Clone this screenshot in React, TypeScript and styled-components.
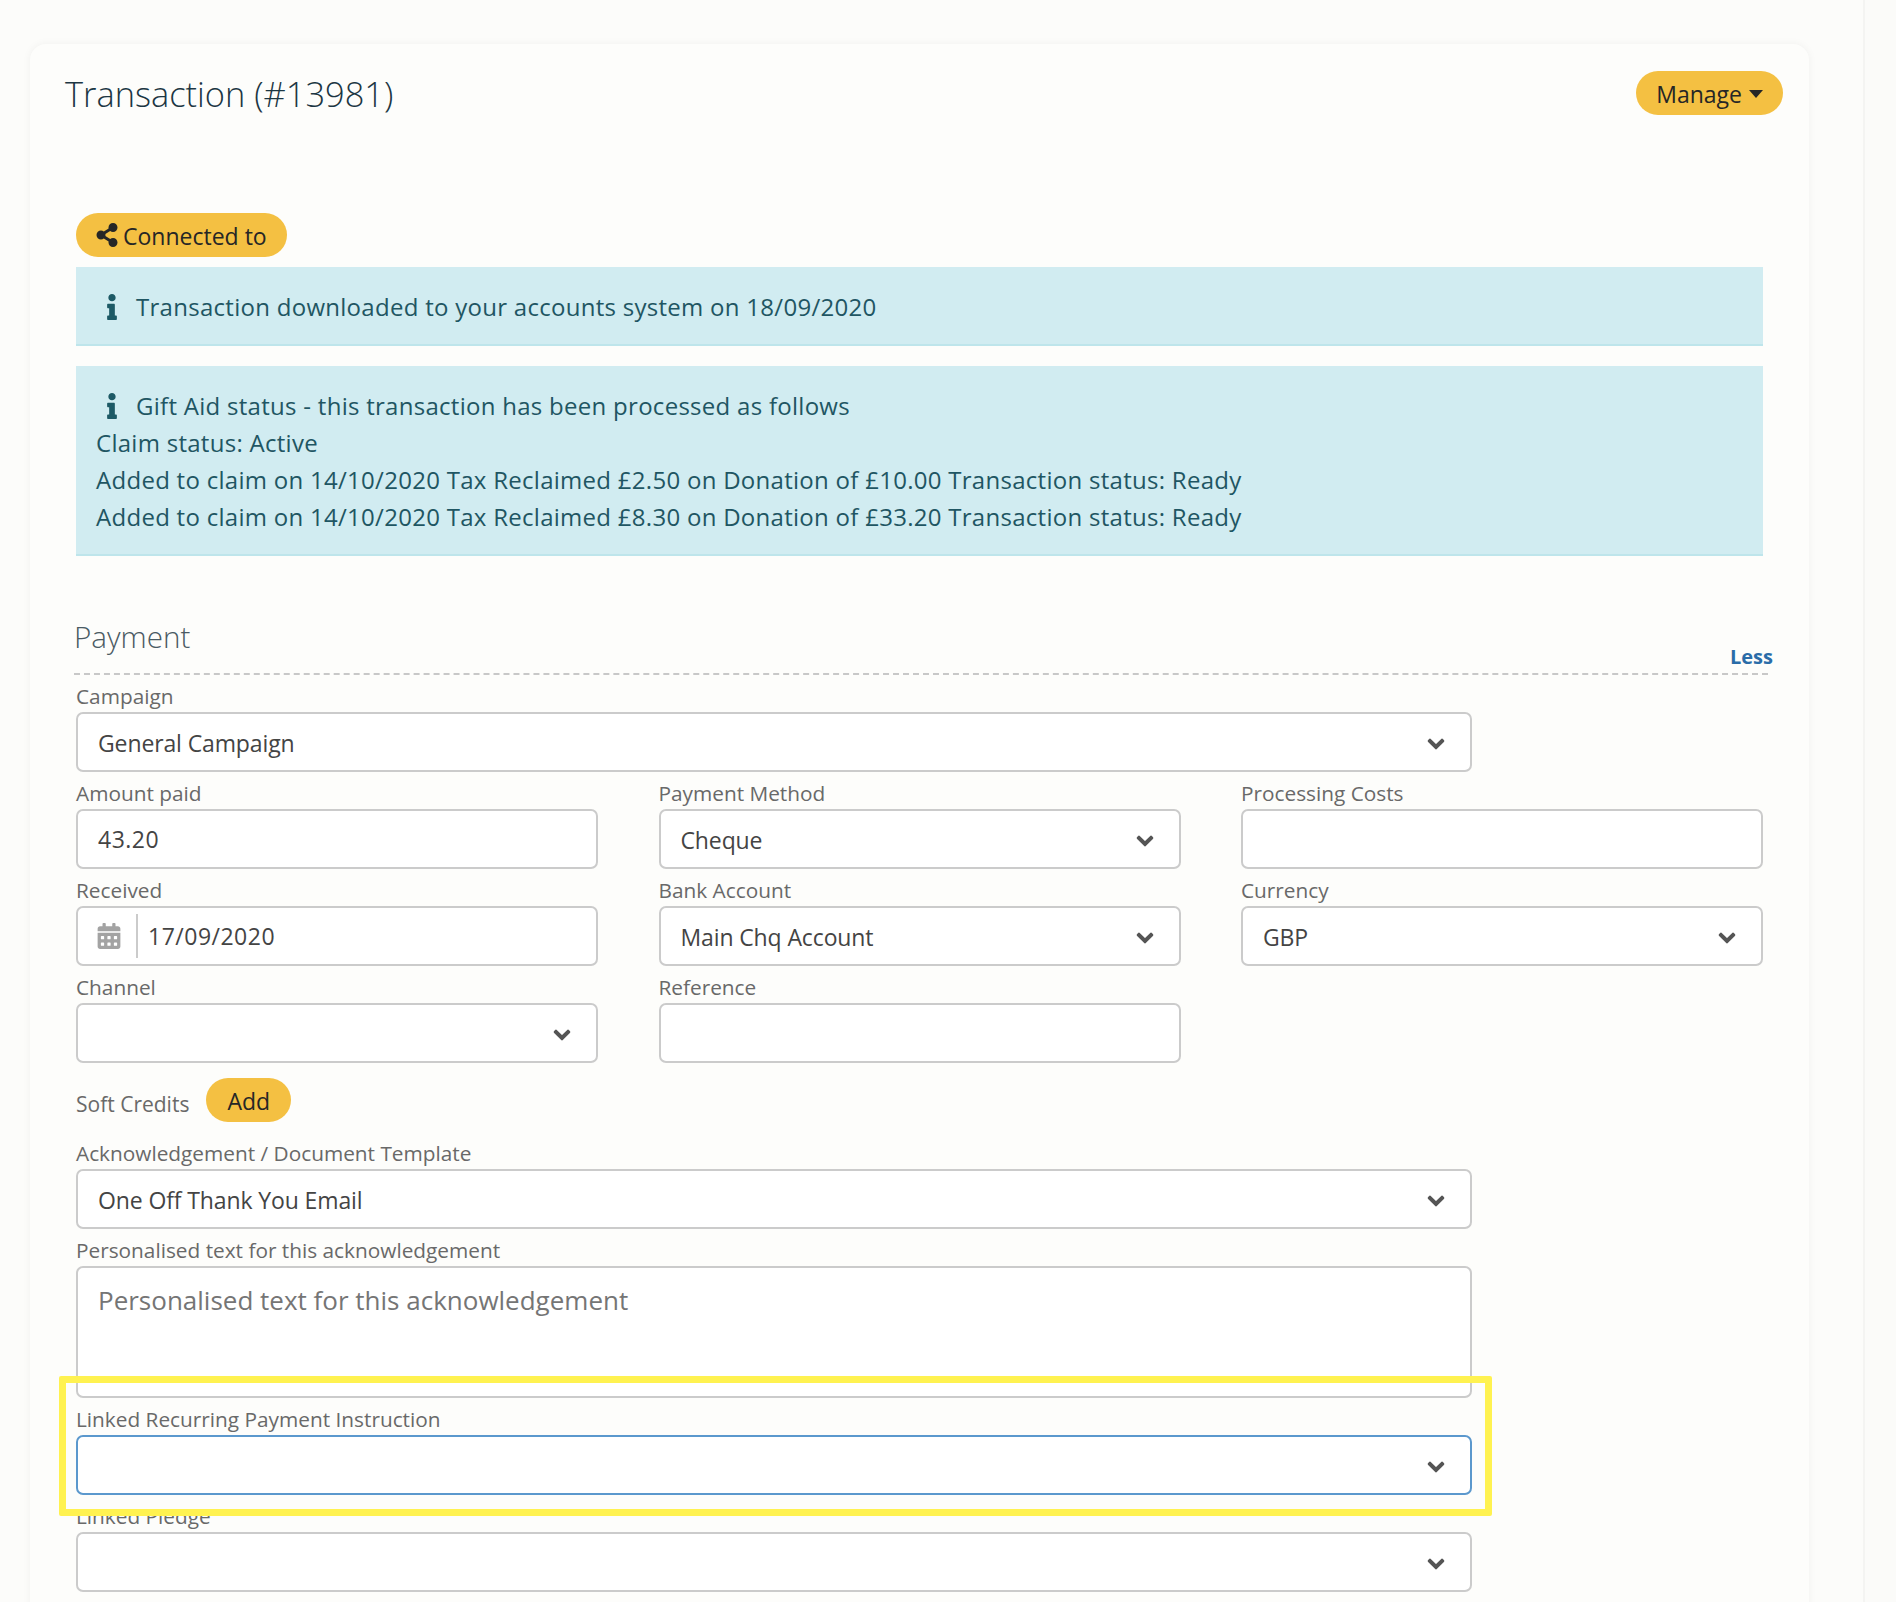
import { createGlobalStyle, styled } from "styled-components";
import { FaCalendarAlt, FaChevronDown, FaInfo, FaShareAlt } from "react-icons/fa";

const GlobalStyle = createGlobalStyle`
  html, body {
    margin: 0;
    height: 1602px;
    overflow: hidden;
    background: #fcfcfa;
    font-family: "Open Sans", "Liberation Sans", sans-serif;
  }
  * {
    box-sizing: border-box;
  }
`;

const Page = styled.div`
  display: flex;
  width: 1896px;
  height: 1602px;
  overflow: hidden;
`;

const Main = styled.main`
  flex: 0 0 1863px;
  padding: 44px 54px 0 30px;
`;

const Aside = styled.aside`
  flex: 1;
  background: #fbfbf9;
  border-left: 2px solid #f4f4f2;
`;

const Card = styled.section`
  position: relative;
  height: 1700px;
  background: #fdfdfb;
  border-radius: 16px;
  box-shadow: 0 0 8px rgba(0, 0, 0, 0.05);
`;

const CardHeader = styled.header`
  display: flex;
  justify-content: space-between;
  align-items: flex-start;
  height: 169px;
  padding: 28px 26px 0 35px;
`;

const Title = styled.h1`
  margin: 0;
  font-size: 34.4px;
  font-weight: 300;
  line-height: 44px;
  color: #1c3643;
`;

const Pill = styled.button<{ $pad?: number }>`
  display: inline-flex;
  align-items: center;
  justify-content: center;
  gap: 4px;
  height: 44px;
  padding: 2px ${(p) => p.$pad ?? 20}px 0;
  border: 0;
  border-radius: 22px;
  background: #f4c042;
  color: #262626;
  font-family: inherit;
  font-size: 23px;
  svg {
    margin: -2px 0 0 -1px;
    font-size: 24px;
  }
`;

const ManagePill = styled(Pill)`
  gap: 5px;
  margin-top: -1px;
`;

const Caret = styled.span`
  display: inline-block;
  width: 0;
  height: 0;
  margin-left: 2px;
  border-left: 7px solid transparent;
  border-right: 7px solid transparent;
  border-top: 8px solid #262626;
`;

const CardBody = styled.div`
  padding: 0 46px;
`;

const Alert = styled.div<{ $gap: number }>`
  margin-top: ${(p) => p.$gap}px;
  padding: 21px 20px 19px;
  background: #d1ecf1;
  border-bottom: 2px solid #bee5eb;
  color: #1f5663;
  font-size: 24px;
  letter-spacing: 0.28px;
  line-height: 37px;
`;

const InfoLine = styled.div`
  display: flex;
  align-items: center;
  gap: 11px;
  padding-left: 3px;
  svg {
    font-size: 26px;
    color: #1d5a66;
  }
`;

const SectionHeader = styled.div`
  display: flex;
  justify-content: space-between;
  align-items: flex-end;
  height: 119px;
  margin: 0 -5px 0 -2px;
  padding-bottom: 3px;
  border-bottom: 2px dashed #c8c8c8;
`;

const SectionTitle = styled.h2`
  margin: 0 0 13px;
  font-size: 29.6px;
  font-weight: 300;
  line-height: 40px;
  color: #4a5a63;
`;

const LessLink = styled.a`
  margin-right: -5px;
  font-size: 20px;
  font-weight: 700;
  color: #2a6ca8;
`;

const FormGrid = styled.div`
  display: grid;
  grid-template-columns: repeat(3, 522px);
  column-gap: 60.5px;
`;

const Field = styled.div<{ $span?: boolean }>`
  grid-column: ${(p) => (p.$span ? "1 / -1" : "auto")};
  max-width: 1396px;
`;

const Label = styled.label`
  display: block;
  height: 37px;
  font-size: 20.8px;
  line-height: 43px;
  color: #696969;
  white-space: nowrap;
`;

const Control = styled.div<{ $focused?: boolean }>`
  display: flex;
  align-items: center;
  justify-content: space-between;
  height: 60px;
  padding: 0 20px;
  background: #fff;
  border: 2px solid ${(p) => (p.$focused ? "#5b98cd" : "#cbcbcb")};
  border-radius: 7px;
  color: #444;
  font-size: 23px;
  svg {
    flex: none;
    margin-right: 5px;
    color: #555;
    font-size: 18px;
    stroke: currentColor;
    stroke-width: 36;
  }
`;

const SelectValue = styled.span`
  padding-top: 2px;
  letter-spacing: -0.12px;
`;

const NumberValue = styled.span`
  flex: 1;
  letter-spacing: 0.5px;
`;

const Chevron = styled(FaChevronDown)`
  position: relative;
  top: 2px;
`;

const DateIcon = styled.span`
  display: flex;
  align-items: center;
  height: 44px;
  margin: 0 10px 0 -2px;
  padding-right: 14px;
  border-right: 2px solid #cbcbcb;
  svg {
    margin: 0;
    color: #a3a3a3;
    font-size: 26px;
    stroke-width: 0;
  }
`;

const TextBox = styled.textarea`
  display: block;
  width: 100%;
  height: 132px;
  padding: 14px 20px;
  background: #fff;
  border: 2px solid #cbcbcb;
  border-radius: 7px;
  font-family: inherit;
  font-size: 26px;
  resize: none;
  &::placeholder {
    color: #757575;
    opacity: 1;
  }
`;

const SoftCredits = styled.div`
  display: flex;
  align-items: center;
  gap: 17px;
  height: 44px;
  margin: 15px 0 10px;
`;

const SoftLabel = styled.span`
  padding-top: 7px;
  color: #696969;
  font-size: 21px;
`;

const Highlight = styled.div`
  position: absolute;
  left: 29px;
  top: 1332px;
  width: 1433px;
  height: 140px;
  border: 7px solid #fff250;
  border-radius: 2px;
  pointer-events: none;
`;

function Select({ value, focused }: { value?: string; focused?: boolean }) {
  return (
    <Control $focused={focused}>
      <SelectValue>{value}</SelectValue>
      <Chevron />
    </Control>
  );
}

function App() {
  return (
    <Page>
      <GlobalStyle />
      <Main>
        <Card>
          <CardHeader>
            <Title>Transaction (#13981)</Title>
            <ManagePill $pad={20}>
              Manage <Caret />
            </ManagePill>
          </CardHeader>
          <CardBody>
            <Pill>
              <FaShareAlt /> Connected to
            </Pill>
            <Alert $gap={10}>
              <InfoLine>
                <FaInfo /> Transaction downloaded to your accounts system on 18/09/2020
              </InfoLine>
            </Alert>
            <Alert $gap={20}>
              <InfoLine>
                <FaInfo /> Gift Aid status - this transaction has been processed as follows
              </InfoLine>
              <div>Claim status: Active</div>
              <div>Added to claim on 14/10/2020 Tax Reclaimed £2.50 on Donation of £10.00 Transaction status: Ready</div>
              <div>Added to claim on 14/10/2020 Tax Reclaimed £8.30 on Donation of £33.20 Transaction status: Ready</div>
            </Alert>
            <SectionHeader>
              <SectionTitle>Payment</SectionTitle>
              <LessLink>Less</LessLink>
            </SectionHeader>
            <FormGrid>
              <Field $span>
                <Label>Campaign</Label>
                <Select value="General Campaign" />
              </Field>
              <Field>
                <Label>Amount paid</Label>
                <Control>
                  <NumberValue>43.20</NumberValue>
                </Control>
              </Field>
              <Field>
                <Label>Payment Method</Label>
                <Select value="Cheque" />
              </Field>
              <Field>
                <Label>Processing Costs</Label>
                <Control />
              </Field>
              <Field>
                <Label>Received</Label>
                <Control>
                  <DateIcon>
                    <FaCalendarAlt />
                  </DateIcon>
                  <NumberValue>17/09/2020</NumberValue>
                </Control>
              </Field>
              <Field>
                <Label>Bank Account</Label>
                <Select value="Main Chq Account" />
              </Field>
              <Field>
                <Label>Currency</Label>
                <Select value="GBP" />
              </Field>
              <Field>
                <Label>Channel</Label>
                <Select />
              </Field>
              <Field>
                <Label>Reference</Label>
                <Control />
              </Field>
            </FormGrid>
            <SoftCredits>
              <SoftLabel>Soft Credits</SoftLabel>
              <Pill $pad={21}>Add</Pill>
            </SoftCredits>
            <Field>
              <Label>Acknowledgement / Document Template</Label>
              <Select value="One Off Thank You Email" />
            </Field>
            <Field>
              <Label>Personalised text for this acknowledgement</Label>
              <TextBox placeholder="Personalised text for this acknowledgement" />
            </Field>
            <Field>
              <Label>Linked Recurring Payment Instruction</Label>
              <Select focused />
            </Field>
            <Field>
              <Label>Linked Pledge</Label>
              <Select />
            </Field>
          </CardBody>
          <Highlight />
        </Card>
      </Main>
      <Aside />
    </Page>
  );
}

export default App;
